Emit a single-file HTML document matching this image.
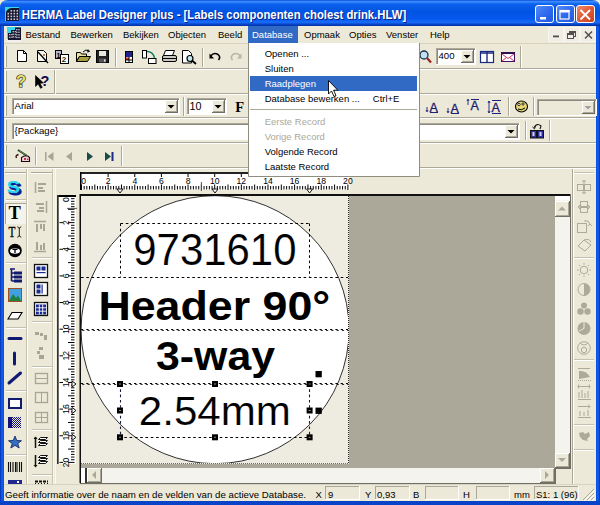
<!DOCTYPE html><html><head><meta charset="utf-8"><style>html,body{margin:0;padding:0;width:600px;height:505px;overflow:hidden;background:#ECE9D8}svg{display:block;font-family:"Liberation Sans",sans-serif}</style></head><body><svg width="600" height="505" viewBox="0 0 600 505" shape-rendering="auto"><rect x="0" y="0" width="600" height="505" fill="#ECE9D8" />
<defs><linearGradient id="tg" x1="0" y1="0" x2="0" y2="26" gradientUnits="userSpaceOnUse"><stop offset="0" stop-color="#0A4AD8"/><stop offset="0.06" stop-color="#3C8EFF"/><stop offset="0.16" stop-color="#0C60EE"/><stop offset="0.45" stop-color="#0054E3"/><stop offset="0.72" stop-color="#0558EC"/><stop offset="0.86" stop-color="#1A6CF8"/><stop offset="0.93" stop-color="#0846C8"/><stop offset="1" stop-color="#0030A8"/></linearGradient><linearGradient id="bmin" x1="0" y1="0" x2="1" y2="1"><stop offset="0" stop-color="#5A8EF8"/><stop offset="0.5" stop-color="#2F6BF0"/><stop offset="1" stop-color="#2456D8"/></linearGradient><linearGradient id="bcl" x1="0" y1="0" x2="1" y2="1"><stop offset="0" stop-color="#F09070"/><stop offset="0.5" stop-color="#E05A38"/><stop offset="1" stop-color="#C8401E"/></linearGradient><linearGradient id="lb" x1="0" y1="0" x2="1" y2="0"><stop offset="0" stop-color="#0831B0"/><stop offset="0.5" stop-color="#1560F0"/><stop offset="1" stop-color="#0050E0"/></linearGradient><linearGradient id="rb" x1="0" y1="0" x2="1" y2="0"><stop offset="0" stop-color="#0050E0"/><stop offset="0.5" stop-color="#1560F0"/><stop offset="1" stop-color="#0831B0"/></linearGradient></defs>
<path d="M0 26 V8 Q0 0 8 0 H592 Q600 0 600 8 V26 Z" fill="url(#tg)"/>
<rect x="0" y="26" width="4" height="479" fill="url(#lb)" />
<rect x="596" y="26" width="4" height="479" fill="url(#rb)" />
<rect x="0" y="501" width="600" height="4" fill="#0843C8" />
<rect x="5" y="7" width="14" height="14" fill="#38D8EE" />
<path d="M6 21 V12 Q8 8 12 8 H19 V21 Z" fill="#15152E"/>
<g fill="#C8C8D0">
<rect x="7.5" y="12.8" width="1.6" height="1.6"/>
<rect x="7.5" y="15.6" width="1.6" height="1.6"/>
<rect x="7.5" y="18.4" width="1.6" height="1.6"/>
<rect x="10.5" y="10.0" width="1.6" height="1.6"/>
<rect x="10.5" y="12.8" width="1.6" height="1.6"/>
<rect x="10.5" y="15.6" width="1.6" height="1.6"/>
<rect x="10.5" y="18.4" width="1.6" height="1.6"/>
<rect x="13.5" y="10.0" width="1.6" height="1.6"/>
<rect x="13.5" y="12.8" width="1.6" height="1.6"/>
<rect x="13.5" y="15.6" width="1.6" height="1.6"/>
<rect x="13.5" y="18.4" width="1.6" height="1.6"/>
<rect x="16.5" y="10.0" width="1.6" height="1.6"/>
<rect x="16.5" y="12.8" width="1.6" height="1.6"/>
<rect x="16.5" y="15.6" width="1.6" height="1.6"/>
<rect x="16.5" y="18.4" width="1.6" height="1.6"/>
</g>
<text transform="translate(22.8,20.3) scale(0.944,1)" font-size="12" font-weight="bold" fill="#0A2080">HERMA Label Designer plus - [Labels componenten cholest drink.HLW]</text>
<text transform="translate(21.8,19.3) scale(0.944,1)" font-size="12" font-weight="bold" fill="#fff">HERMA Label Designer plus - [Labels componenten cholest drink.HLW]</text>
<rect x="535.5" y="5.5" width="18" height="17" rx="2.5" fill="url(#bmin)" stroke="#fff" stroke-width="1"/>
<rect x="556.5" y="5.5" width="18" height="17" rx="2.5" fill="url(#bmin)" stroke="#fff" stroke-width="1"/>
<rect x="576.5" y="5.5" width="18" height="17" rx="2.5" fill="url(#bcl)" stroke="#fff" stroke-width="1"/>
<rect x="540" y="17" width="6" height="2.5" fill="#fff" />
<rect x="560" y="10.5" width="9" height="8.5" fill="none" stroke="#fff" stroke-width="1.2"/>
<rect x="560" y="10" width="9.5" height="2.5" fill="#fff" />
<path d="M580.5 10 L590 19.5 M590 10 L580.5 19.5" stroke="#fff" stroke-width="1.8"/>
<rect x="4" y="26" width="592" height="18" fill="#ECE9D8" />
<rect x="7" y="27" width="14" height="15" fill="#38D8EE" />
<rect x="7" y="39" width="14" height="3" fill="#F0F0F0" />
<path d="M8 40 V33 H11 V30 H15 V27.5 H21 V40 Z" fill="#15152E"/>
<g fill="#B8B8C0">
<rect x="9" y="34.0" width="1.5" height="1.3"/><rect x="11.2" y="34.0" width="1.5" height="1.3"/>
<rect x="9" y="36.6" width="1.5" height="1.3"/><rect x="11.2" y="36.6" width="1.5" height="1.3"/>
<rect x="12.5" y="31.0" width="1.5" height="1.3"/><rect x="14.7" y="31.0" width="1.5" height="1.3"/>
<rect x="12.5" y="33.6" width="1.5" height="1.3"/><rect x="14.7" y="33.6" width="1.5" height="1.3"/>
<rect x="12.5" y="36.2" width="1.5" height="1.3"/><rect x="14.7" y="36.2" width="1.5" height="1.3"/>
<rect x="16" y="29.0" width="1.5" height="1.3"/><rect x="18.2" y="29.0" width="1.5" height="1.3"/>
<rect x="16" y="31.6" width="1.5" height="1.3"/><rect x="18.2" y="31.6" width="1.5" height="1.3"/>
<rect x="16" y="34.2" width="1.5" height="1.3"/><rect x="18.2" y="34.2" width="1.5" height="1.3"/>
<rect x="16" y="36.8" width="1.5" height="1.3"/><rect x="18.2" y="36.8" width="1.5" height="1.3"/>
</g>
<text x="25.5" y="37.8" font-size="9.5" fill="#000" font-weight="normal" text-anchor="start" >Bestand</text>
<text x="70.5" y="37.8" font-size="9.5" fill="#000" font-weight="normal" text-anchor="start" >Bewerken</text>
<text x="123" y="37.8" font-size="9.5" fill="#000" font-weight="normal" text-anchor="start" >Bekijken</text>
<text x="168" y="37.8" font-size="9.5" fill="#000" font-weight="normal" text-anchor="start" >Objecten</text>
<text x="218" y="37.8" font-size="9.5" fill="#000" font-weight="normal" text-anchor="start" >Beeld</text>
<rect x="248" y="26" width="50" height="17" fill="#316AC5" />
<text x="252" y="37.8" font-size="9.5" fill="#fff" font-weight="normal" text-anchor="start" >Database</text>
<text x="304" y="37.8" font-size="9.5" fill="#000" font-weight="normal" text-anchor="start" >Opmaak</text>
<text x="349" y="37.8" font-size="9.5" fill="#000" font-weight="normal" text-anchor="start" >Opties</text>
<text x="386" y="37.8" font-size="9.5" fill="#000" font-weight="normal" text-anchor="start" >Venster</text>
<text x="430" y="37.8" font-size="9.5" fill="#000" font-weight="normal" text-anchor="start" >Help</text>
<rect x="548.5" y="27.5" width="15" height="14" fill="#F0EEE4" stroke="#F6F5F0" stroke-width="1"/>
<rect x="564.5" y="27.5" width="15" height="14" fill="#F0EEE4" stroke="#F6F5F0" stroke-width="1"/>
<rect x="580.5" y="27.5" width="15" height="14" fill="#F0EEE4" stroke="#F6F5F0" stroke-width="1"/>
<rect x="553" y="35.5" width="6" height="1.8" fill="#505050" />
<rect x="569.5" y="31.5" width="6" height="5" fill="none" stroke="#505050"/><rect x="567.5" y="33.5" width="6" height="5" fill="#F0EEE4" stroke="#505050"/>
<rect x="569.5" y="31.5" width="6" height="1.5" fill="#505050" />
<rect x="567.5" y="33.5" width="6" height="1.5" fill="#505050" />
<path d="M585 31.5 L592 38.5 M592 31.5 L585 38.5" stroke="#505050" stroke-width="1.5"/>
<line x1="4" y1="68.5" x2="596" y2="68.5" stroke="#ACA899" stroke-width="1"/>
<line x1="4" y1="69.5" x2="596" y2="69.5" stroke="#fff" stroke-width="1"/>
<line x1="4" y1="93.5" x2="596" y2="93.5" stroke="#ACA899" stroke-width="1"/>
<line x1="4" y1="94.5" x2="596" y2="94.5" stroke="#fff" stroke-width="1"/>
<line x1="4" y1="117.5" x2="596" y2="117.5" stroke="#ACA899" stroke-width="1"/>
<line x1="4" y1="118.5" x2="596" y2="118.5" stroke="#fff" stroke-width="1"/>
<line x1="4" y1="142.5" x2="596" y2="142.5" stroke="#ACA899" stroke-width="1"/>
<line x1="4" y1="143.5" x2="596" y2="143.5" stroke="#fff" stroke-width="1"/>
<line x1="4" y1="167.5" x2="596" y2="167.5" stroke="#ACA899" stroke-width="1"/>
<line x1="4" y1="168.5" x2="596" y2="168.5" stroke="#fff" stroke-width="1"/>
<line x1="4" y1="43.5" x2="596" y2="43.5" stroke="#D8D2BD" stroke-width="1"/>
<line x1="5.5" y1="46" x2="5.5" y2="67" stroke="#fff" stroke-width="1"/>
<line x1="6.5" y1="46" x2="6.5" y2="67" stroke="#ACA899" stroke-width="1"/>
<line x1="5.5" y1="71" x2="5.5" y2="92" stroke="#fff" stroke-width="1"/>
<line x1="6.5" y1="71" x2="6.5" y2="92" stroke="#ACA899" stroke-width="1"/>
<line x1="5.5" y1="96" x2="5.5" y2="116" stroke="#fff" stroke-width="1"/>
<line x1="6.5" y1="96" x2="6.5" y2="116" stroke="#ACA899" stroke-width="1"/>
<line x1="5.5" y1="120" x2="5.5" y2="141" stroke="#fff" stroke-width="1"/>
<line x1="6.5" y1="120" x2="6.5" y2="141" stroke="#ACA899" stroke-width="1"/>
<line x1="5.5" y1="145" x2="5.5" y2="166" stroke="#fff" stroke-width="1"/>
<line x1="6.5" y1="145" x2="6.5" y2="166" stroke="#ACA899" stroke-width="1"/>
<line x1="54.5" y1="70" x2="54.5" y2="94" stroke="#ACA899" stroke-width="1"/>
<line x1="55.5" y1="70" x2="55.5" y2="94" stroke="#fff" stroke-width="1"/>
<path d="M17.5 50.5 H23.5 L26.5 53.5 V61.5 H17.5 Z" fill="#fff" stroke="#000"/>
<path d="M23.5 50.5 V53.5 H26.5" fill="none" stroke="#000"/>
<path d="M37.5 50.5 H43.5 L46.5 53.5 V61.5 H37.5 Z" fill="#F8F8F0" stroke="#000"/>
<path d="M38 52 L48 63" stroke="#000" stroke-width="1.3"/>
<rect x="43" y="54" width="2" height="2" fill="#C08040"/>
<rect x="55.5" y="50.5" width="6" height="8" fill="#B8B8D0" stroke="#000"/>
<rect x="60.5" y="54.5" width="8" height="9" fill="#fff" stroke="#000"/>
<text x="56.5" y="57.5" font-size="7" font-weight="bold" fill="#000">1</text>
<text x="61.8" y="62.2" font-size="8" font-weight="bold" fill="#000" fill-opacity="0.9">2</text>
<path d="M76.5 52.5 H80.5 L81.5 54 H86.5 V56.5 H79.5 L76.5 61.5 Z" fill="#E8E0A0" stroke="#000"/>
<path d="M76.5 61.5 L79.5 56.5 H90.5 L87.5 61.5 Z" fill="#A8A040" stroke="#000"/>
<path d="M83 52 Q86 48.5 89 51" fill="none" stroke="#000"/><path d="M88 49.5 L89.5 51.5 L87 52" fill="none" stroke="#000"/>
<rect x="96.5" y="50.5" width="12" height="12" fill="#222" stroke="#000"/>
<rect x="99" y="51" width="7" height="5" fill="#E8E8E0"/>
<rect x="99" y="58.5" width="7" height="4" fill="#555"/><rect x="104" y="59.5" width="1.5" height="2" fill="#eee"/>
<line x1="115.5" y1="48" x2="115.5" y2="67" stroke="#ACA899" stroke-width="1"/>
<line x1="116.5" y1="48" x2="116.5" y2="67" stroke="#fff" stroke-width="1"/>
<rect x="125.5" y="51.5" width="7" height="11" fill="#fff" stroke="#000"/>
<rect x="126" y="52" width="6" height="5" fill="#202090" />
<rect x="126" y="57.5" width="3" height="2.5" fill="#D03020" />
<path d="M129 57 V62 M126 60 H132" stroke="#000"/>
<rect x="142.5" y="50.5" width="4" height="7.5" fill="#fff" stroke="#000"/>
<path d="M147 51.5 Q153 51.5 154.5 58" fill="none" stroke="#107860" stroke-width="1.4"/>
<rect x="148.5" y="58.5" width="7.5" height="5" fill="#fff" stroke="#000"/>
<path d="M165.5 50.5 H174.5 L172.5 55.5 H163.5 Z" fill="#fff" stroke="#000"/>
<rect x="162.5" y="55.5" width="14" height="6" rx="1.5" fill="#C8C8C0" stroke="#000"/>
<path d="M163 58.5 H176" stroke="#000"/>
<path d="M182.5 50.5 H188.5 L191.5 53.5 V63 H182.5 Z" fill="#fff" stroke="#000"/>
<circle cx="190" cy="58.5" r="3" fill="#C0E8E8" stroke="#000" stroke-width="1.2"/>
<path d="M192 60.5 L196 64" stroke="#000" stroke-width="1.8"/>
<line x1="202.5" y1="48" x2="202.5" y2="67" stroke="#ACA899" stroke-width="1"/>
<line x1="203.5" y1="48" x2="203.5" y2="67" stroke="#fff" stroke-width="1"/>
<path d="M210.5 56 Q214 52 218 54.5 Q221 57 218.5 60" fill="none" stroke="#000" stroke-width="1.6"/>
<path d="M209.5 53.5 V58.5 H214 Z" fill="#000"/>
<path d="M240.5 56 Q237 52 233 54.5 Q230 57 232.5 60" fill="none" stroke="#B8B4A8" stroke-width="1.6"/>
<path d="M241.5 53.5 V58.5 H237 Z" fill="#B8B4A8"/>
<circle cx="424" cy="55" r="4" fill="#C0E0F0" stroke="#203050" stroke-width="1.3"/>
<path d="M427 58 L431 62.5" stroke="#A02020" stroke-width="2.2"/>
<rect x="480.5" y="51.5" width="13" height="11" fill="#fff" stroke="#1a2a80" stroke-width="1.2"/>
<path d="M481 53 H493 M487 52 V62" stroke="#1a2a80" stroke-width="1.4"/>
<rect x="501.5" y="52.5" width="13" height="9" fill="#fff" stroke="#401060" stroke-width="1"/>
<rect x="501" y="52" width="14" height="2" fill="#301050" />
<path d="M502 54 L508 58.5 L514 54 M502 61 L506.5 57.5 M514 61 L509.5 57.5" fill="none" stroke="#D03070" stroke-width="1"/>
<line x1="520.5" y1="46" x2="520.5" y2="68" stroke="#ACA899" stroke-width="1"/>
<line x1="521.5" y1="46" x2="521.5" y2="68" stroke="#fff" stroke-width="1"/>
<text x="16" y="87.3" font-size="16.5" font-weight="bold" fill="#E8E070" stroke="#111" stroke-width="1.1" paint-order="stroke" style="paint-order:stroke">?</text>
<path d="M35.5 75.5 V86.5 L38.2 84 L40.5 88.3 L42.3 87.4 L40 83.3 L43.5 83 Z" fill="#000" stroke="#000" stroke-width="0.6"/>
<text x="40.5" y="86" font-size="14.5" font-weight="bold" fill="#0A0A50">?</text>
<rect x="12" y="98" width="168" height="17" fill="#fff"/>
<line x1="12" y1="98.5" x2="180" y2="98.5" stroke="#ACA899" stroke-width="1"/>
<line x1="12.5" y1="98" x2="12.5" y2="115" stroke="#ACA899" stroke-width="1"/>
<line x1="13" y1="99.5" x2="179" y2="99.5" stroke="#8C8A80" stroke-width="1"/>
<line x1="13.5" y1="99" x2="13.5" y2="114" stroke="#8C8A80" stroke-width="1"/>
<line x1="12" y1="114.5" x2="180" y2="114.5" stroke="#fff" stroke-width="1"/>
<line x1="179.5" y1="98" x2="179.5" y2="115" stroke="#fff" stroke-width="1"/>
<rect x="165" y="100" width="13" height="13" fill="#ECE9D8"/>
<line x1="165" y1="100.5" x2="178" y2="100.5" stroke="#fff" stroke-width="1"/>
<line x1="165.5" y1="100" x2="165.5" y2="113" stroke="#fff" stroke-width="1"/>
<line x1="165" y1="112.5" x2="178" y2="112.5" stroke="#716F64" stroke-width="1"/>
<line x1="177.5" y1="100" x2="177.5" y2="113" stroke="#716F64" stroke-width="1"/>
<line x1="166" y1="111.5" x2="177" y2="111.5" stroke="#ACA899" stroke-width="1"/>
<line x1="176.5" y1="101" x2="176.5" y2="112" stroke="#ACA899" stroke-width="1"/>
<path d="M167.5 105.0 H174.5 L171.0 108.5 Z" fill="#000"/>
<text x="14.5" y="109.4" font-size="9.6" fill="#000" font-weight="normal" text-anchor="start" >Arial</text>
<rect x="187" y="98" width="40" height="17" fill="#fff"/>
<line x1="187" y1="98.5" x2="227" y2="98.5" stroke="#ACA899" stroke-width="1"/>
<line x1="187.5" y1="98" x2="187.5" y2="115" stroke="#ACA899" stroke-width="1"/>
<line x1="188" y1="99.5" x2="226" y2="99.5" stroke="#8C8A80" stroke-width="1"/>
<line x1="188.5" y1="99" x2="188.5" y2="114" stroke="#8C8A80" stroke-width="1"/>
<line x1="187" y1="114.5" x2="227" y2="114.5" stroke="#fff" stroke-width="1"/>
<line x1="226.5" y1="98" x2="226.5" y2="115" stroke="#fff" stroke-width="1"/>
<rect x="212" y="100" width="13" height="13" fill="#ECE9D8"/>
<line x1="212" y1="100.5" x2="225" y2="100.5" stroke="#fff" stroke-width="1"/>
<line x1="212.5" y1="100" x2="212.5" y2="113" stroke="#fff" stroke-width="1"/>
<line x1="212" y1="112.5" x2="225" y2="112.5" stroke="#716F64" stroke-width="1"/>
<line x1="224.5" y1="100" x2="224.5" y2="113" stroke="#716F64" stroke-width="1"/>
<line x1="213" y1="111.5" x2="224" y2="111.5" stroke="#ACA899" stroke-width="1"/>
<line x1="223.5" y1="101" x2="223.5" y2="112" stroke="#ACA899" stroke-width="1"/>
<path d="M214.5 105.0 H221.5 L218.0 108.5 Z" fill="#000"/>
<text x="189.5" y="109.8" font-size="10.8" fill="#000" font-weight="normal" text-anchor="start" >10</text>
<line x1="183.5" y1="97" x2="183.5" y2="116" stroke="#ACA899" stroke-width="1"/>
<line x1="184.5" y1="97" x2="184.5" y2="116" stroke="#fff" stroke-width="1"/>
<rect x="436" y="48" width="40" height="17" fill="#fff"/>
<line x1="436" y1="48.5" x2="476" y2="48.5" stroke="#ACA899" stroke-width="1"/>
<line x1="436.5" y1="48" x2="436.5" y2="65" stroke="#ACA899" stroke-width="1"/>
<line x1="437" y1="49.5" x2="475" y2="49.5" stroke="#8C8A80" stroke-width="1"/>
<line x1="437.5" y1="49" x2="437.5" y2="64" stroke="#8C8A80" stroke-width="1"/>
<line x1="436" y1="64.5" x2="476" y2="64.5" stroke="#fff" stroke-width="1"/>
<line x1="475.5" y1="48" x2="475.5" y2="65" stroke="#fff" stroke-width="1"/>
<rect x="461" y="50" width="13" height="13" fill="#ECE9D8"/>
<line x1="461" y1="50.5" x2="474" y2="50.5" stroke="#fff" stroke-width="1"/>
<line x1="461.5" y1="50" x2="461.5" y2="63" stroke="#fff" stroke-width="1"/>
<line x1="461" y1="62.5" x2="474" y2="62.5" stroke="#716F64" stroke-width="1"/>
<line x1="473.5" y1="50" x2="473.5" y2="63" stroke="#716F64" stroke-width="1"/>
<line x1="462" y1="61.5" x2="473" y2="61.5" stroke="#ACA899" stroke-width="1"/>
<line x1="472.5" y1="51" x2="472.5" y2="62" stroke="#ACA899" stroke-width="1"/>
<path d="M463.5 55.0 H470.5 L467.0 58.5 Z" fill="#000"/>
<text x="438.5" y="59.4" font-size="9.6" fill="#000" font-weight="normal" text-anchor="start" >400</text>
<text x="235.3" y="112" font-size="14.5" font-weight="bold" fill="#000" font-family="Liberation Serif">F</text>
<text x="429.5" y="111.5" font-size="12.5" fill="#1a1a70" stroke="#1a1a70" stroke-width="0.3">A</text>
<path d="M430 112.5 H438" stroke="#202080"/>
<path d="M427 107 V111 M426 110 L427 112 L428 110" stroke="#202080" fill="none" stroke-width="0.9"/>
<text x="450.5" y="112.5" font-size="12.5" fill="#1a1a70" stroke="#1a1a70" stroke-width="0.3">A</text>
<path d="M451 113.5 H459" stroke="#202080"/>
<path d="M448 108 V112 M447 111 L448 113 L449 111" stroke="#202080" fill="none" stroke-width="0.9"/>
<text x="470.5" y="109.5" font-size="12.5" fill="#1a1a70" stroke="#1a1a70" stroke-width="0.3">A</text>
<path d="M471 99.5 H479" stroke="#202080"/>
<path d="M468 100 V105 M467 101 L468 99 L469 101" stroke="#202080" fill="none" stroke-width="0.9"/>
<text x="491.5" y="111.5" font-size="12.5" fill="#1a1a70" stroke="#1a1a70" stroke-width="0.3">A</text>
<path d="M492 100.5 H501 M492 113.5 H501" stroke="#202080"/>
<path d="M489 101 V113 M488 103 L489 101 L490 103 M488 111 L489 113 L490 111" stroke="#202080" fill="none" stroke-width="0.9"/>
<line x1="508.5" y1="97" x2="508.5" y2="116" stroke="#ACA899" stroke-width="1"/>
<line x1="509.5" y1="97" x2="509.5" y2="116" stroke="#fff" stroke-width="1"/>
<ellipse cx="521.5" cy="106.5" rx="6" ry="5.5" fill="#E8D870" stroke="#000" stroke-width="1.1"/>
<circle cx="519" cy="104.5" r="1.2" fill="#fff" stroke="#000" stroke-width="0.8"/><circle cx="523" cy="104" r="1.1" fill="#fff" stroke="#000" stroke-width="0.8"/><path d="M518 109 Q521 111 525 108" fill="none" stroke="#000" stroke-width="1"/>
<line x1="533.5" y1="97" x2="533.5" y2="116" stroke="#ACA899" stroke-width="1"/>
<line x1="534.5" y1="97" x2="534.5" y2="116" stroke="#fff" stroke-width="1"/>
<rect x="537" y="99" width="60" height="17" fill="#ECE9D8"/>
<line x1="537" y1="99.5" x2="597" y2="99.5" stroke="#ACA899" stroke-width="1"/>
<line x1="537.5" y1="99" x2="537.5" y2="116" stroke="#ACA899" stroke-width="1"/>
<line x1="538" y1="100.5" x2="596" y2="100.5" stroke="#8C8A80" stroke-width="1"/>
<line x1="538.5" y1="100" x2="538.5" y2="115" stroke="#8C8A80" stroke-width="1"/>
<line x1="537" y1="115.5" x2="597" y2="115.5" stroke="#fff" stroke-width="1"/>
<line x1="596.5" y1="99" x2="596.5" y2="116" stroke="#fff" stroke-width="1"/>
<rect x="582" y="101" width="13" height="13" fill="#ECE9D8"/>
<line x1="582" y1="101.5" x2="595" y2="101.5" stroke="#fff" stroke-width="1"/>
<line x1="582.5" y1="101" x2="582.5" y2="114" stroke="#fff" stroke-width="1"/>
<line x1="582" y1="113.5" x2="595" y2="113.5" stroke="#716F64" stroke-width="1"/>
<line x1="594.5" y1="101" x2="594.5" y2="114" stroke="#716F64" stroke-width="1"/>
<line x1="583" y1="112.5" x2="594" y2="112.5" stroke="#ACA899" stroke-width="1"/>
<line x1="593.5" y1="102" x2="593.5" y2="113" stroke="#ACA899" stroke-width="1"/>
<path d="M584.5 106.0 H591.5 L588.0 109.5 Z" fill="#A0A0A0"/>
<rect x="12" y="123" width="508" height="17" fill="#fff"/>
<line x1="12" y1="123.5" x2="520" y2="123.5" stroke="#ACA899" stroke-width="1"/>
<line x1="12.5" y1="123" x2="12.5" y2="140" stroke="#ACA899" stroke-width="1"/>
<line x1="13" y1="124.5" x2="519" y2="124.5" stroke="#8C8A80" stroke-width="1"/>
<line x1="13.5" y1="124" x2="13.5" y2="139" stroke="#8C8A80" stroke-width="1"/>
<line x1="12" y1="139.5" x2="520" y2="139.5" stroke="#fff" stroke-width="1"/>
<line x1="519.5" y1="123" x2="519.5" y2="140" stroke="#fff" stroke-width="1"/>
<rect x="505" y="125" width="13" height="13" fill="#ECE9D8"/>
<line x1="505" y1="125.5" x2="518" y2="125.5" stroke="#fff" stroke-width="1"/>
<line x1="505.5" y1="125" x2="505.5" y2="138" stroke="#fff" stroke-width="1"/>
<line x1="505" y1="137.5" x2="518" y2="137.5" stroke="#716F64" stroke-width="1"/>
<line x1="517.5" y1="125" x2="517.5" y2="138" stroke="#716F64" stroke-width="1"/>
<line x1="506" y1="136.5" x2="517" y2="136.5" stroke="#ACA899" stroke-width="1"/>
<line x1="516.5" y1="126" x2="516.5" y2="137" stroke="#ACA899" stroke-width="1"/>
<path d="M507.5 130.0 H514.5 L511.0 133.5 Z" fill="#000"/>
<text x="14.5" y="134.4" font-size="9.6" fill="#000" font-weight="normal" text-anchor="start" >{Package}</text>
<line x1="525.5" y1="121" x2="525.5" y2="140" stroke="#ACA899" stroke-width="1"/>
<line x1="526.5" y1="121" x2="526.5" y2="140" stroke="#fff" stroke-width="1"/>
<rect x="530.5" y="130.5" width="6" height="7.5" fill="#3030A0" stroke="#111" stroke-width="1"/><rect x="537.5" y="130.5" width="6" height="7.5" fill="#3030A0" stroke="#111" stroke-width="1"/>
<rect x="532.5" y="132" width="2" height="4" fill="#D0D0F0"/><rect x="539.5" y="132" width="2" height="4" fill="#D0D0F0"/>
<path d="M534 127.5 Q537 122.5 541 126 L540 129" fill="none" stroke="#111" stroke-width="1.1"/><path d="M532.5 127 L534.5 128.8 L535.5 126.3" fill="none" stroke="#111" stroke-width="1"/>
<line x1="549.5" y1="120" x2="549.5" y2="141" stroke="#ACA899" stroke-width="1"/>
<line x1="550.5" y1="120" x2="550.5" y2="141" stroke="#fff" stroke-width="1"/>
<path d="M18 150 L26.5 155.5" stroke="#1a3a1a" stroke-width="2"/><path d="M19 150.5 L26 155" stroke="#80B080" stroke-width="0.7"/>
<path d="M18.5 154.5 Q15 155.5 16.5 158" fill="none" stroke="#301010" stroke-width="1.4"/>
<path d="M21.5 161.5 V157.5 L24 156 H28 L29.5 157.5 V161.5 Z" fill="#F0D0D8" stroke="#1a0a0a" stroke-width="1.1"/>
<rect x="24" y="158" width="2" height="2" fill="#C03050"/><rect x="27" y="158.5" width="1.5" height="1.5" fill="#C03050"/>
<line x1="35.5" y1="147" x2="35.5" y2="165" stroke="#ACA899" stroke-width="1"/>
<line x1="36.5" y1="147" x2="36.5" y2="165" stroke="#fff" stroke-width="1"/>
<rect x="45" y="152" width="1.5" height="9" fill="#A8A498"/><path d="M53.5 152 V161 L47.5 156.5 Z" fill="#A8A498"/>
<path d="M72 152 V161 L66 156.5 Z" fill="#A8A498"/>
<path d="M87 152 V161 L93 156.5 Z" fill="#1A4A4A"/>
<path d="M105 152 V161 L111 156.5 Z" fill="#1A4A4A"/><rect x="111.5" y="152" width="2" height="9" fill="#1A2A8A"/>
<line x1="121.5" y1="146" x2="121.5" y2="166" stroke="#ACA899" stroke-width="1"/>
<line x1="122.5" y1="146" x2="122.5" y2="166" stroke="#fff" stroke-width="1"/>
<line x1="5" y1="172.5" x2="26" y2="172.5" stroke="#ACA899" stroke-width="1"/>
<line x1="5" y1="173.5" x2="26" y2="173.5" stroke="#fff" stroke-width="1"/>
<line x1="31" y1="172.5" x2="52" y2="172.5" stroke="#ACA899" stroke-width="1"/>
<line x1="31" y1="173.5" x2="52" y2="173.5" stroke="#fff" stroke-width="1"/>
<line x1="26.5" y1="169" x2="26.5" y2="484" stroke="#C4C0B0" stroke-width="1"/>
<line x1="27.5" y1="169" x2="27.5" y2="484" stroke="#fff" stroke-width="1"/>
<line x1="52.5" y1="169" x2="52.5" y2="484" stroke="#C8C4B4" stroke-width="1"/>
<line x1="53.5" y1="169" x2="53.5" y2="484" stroke="#F8F7F0" stroke-width="1"/>
<line x1="55.5" y1="169" x2="55.5" y2="484" stroke="#FAF9F4" stroke-width="1"/>
<rect x="80" y="173" width="270" height="17" fill="#fff" />
<rect x="80" y="172" width="270" height="2" fill="#222" />
<rect x="80" y="172" width="1.5" height="18" fill="#000" />
<rect x="58" y="195" width="18" height="269" fill="#fff" />
<rect x="57" y="195" width="19" height="2" fill="#000" />
<rect x="57" y="195" width="1.7" height="269" fill="#333" />
<rect x="80" y="194" width="491" height="2" fill="#111" />
<rect x="79.5" y="194" width="1.5" height="289" fill="#111" />
<rect x="81" y="196" width="474" height="272" fill="#ACA899" />
<rect x="81" y="196" width="267" height="267" fill="#EEEBE0" />
<path d="M81.50 184.5 V190 M84.16 186 V189.5 M86.83 186 V189.5 M89.49 186 V189.5 M92.16 186 V189.5 M94.82 184.5 V190 M97.48 186 V189.5 M100.15 186 V189.5 M102.81 186 V189.5 M105.48 186 V189.5 M108.14 184.5 V190 M108.14 174 V177 M110.80 186 V189.5 M113.47 186 V189.5 M116.13 186 V189.5 M118.80 186 V189.5 M121.46 184.5 V190 M124.12 186 V189.5 M126.79 186 V189.5 M129.45 186 V189.5 M132.12 186 V189.5 M134.78 184.5 V190 M134.78 174 V177 M137.44 186 V189.5 M140.11 186 V189.5 M142.77 186 V189.5 M145.44 186 V189.5 M148.10 184.5 V190 M150.76 186 V189.5 M153.43 186 V189.5 M156.09 186 V189.5 M158.76 186 V189.5 M161.42 184.5 V190 M161.42 174 V177 M164.08 186 V189.5 M166.75 186 V189.5 M169.41 186 V189.5 M172.08 186 V189.5 M174.74 184.5 V190 M177.40 186 V189.5 M180.07 186 V189.5 M182.73 186 V189.5 M185.40 186 V189.5 M188.06 184.5 V190 M188.06 174 V177 M190.72 186 V189.5 M193.39 186 V189.5 M196.05 186 V189.5 M198.72 186 V189.5 M201.38 184.5 V190 M204.04 186 V189.5 M206.71 186 V189.5 M209.37 186 V189.5 M212.04 186 V189.5 M214.70 184.5 V190 M214.70 174 V177 M217.36 186 V189.5 M220.03 186 V189.5 M222.69 186 V189.5 M225.36 186 V189.5 M228.02 184.5 V190 M230.68 186 V189.5 M233.35 186 V189.5 M236.01 186 V189.5 M238.68 186 V189.5 M241.34 184.5 V190 M241.34 174 V177 M244.00 186 V189.5 M246.67 186 V189.5 M249.33 186 V189.5 M252.00 186 V189.5 M254.66 184.5 V190 M257.32 186 V189.5 M259.99 186 V189.5 M262.65 186 V189.5 M265.32 186 V189.5 M267.98 184.5 V190 M267.98 174 V177 M270.64 186 V189.5 M273.31 186 V189.5 M275.97 186 V189.5 M278.64 186 V189.5 M281.30 184.5 V190 M283.96 186 V189.5 M286.63 186 V189.5 M289.29 186 V189.5 M291.96 186 V189.5 M294.62 184.5 V190 M294.62 174 V177 M297.28 186 V189.5 M299.95 186 V189.5 M302.61 186 V189.5 M305.28 186 V189.5 M307.94 184.5 V190 M310.60 186 V189.5 M313.27 186 V189.5 M315.93 186 V189.5 M318.60 186 V189.5 M321.26 184.5 V190 M321.26 174 V177 M323.92 186 V189.5 M326.59 186 V189.5 M329.25 186 V189.5 M331.92 186 V189.5 M334.58 184.5 V190 M337.24 186 V189.5 M339.91 186 V189.5 M342.57 186 V189.5 M345.24 186 V189.5 M347.90 184.5 V190 M347.90 174 V177" stroke="#000" stroke-width="1"/>
<path d="M201.38 182 V191" stroke="#555" stroke-width="1"/>
<text x="81.3" y="184" font-size="8.6" fill="#000" font-weight="normal" text-anchor="start" >0</text>
<text x="108.14" y="184" font-size="8.6" fill="#000" font-weight="normal" text-anchor="middle" >2</text>
<text x="134.78" y="184" font-size="8.6" fill="#000" font-weight="normal" text-anchor="middle" >4</text>
<text x="161.42000000000002" y="184" font-size="8.6" fill="#000" font-weight="normal" text-anchor="middle" >6</text>
<text x="188.06" y="184" font-size="8.6" fill="#000" font-weight="normal" text-anchor="middle" >8</text>
<text x="214.7" y="184" font-size="8.6" fill="#000" font-weight="normal" text-anchor="middle" >10</text>
<text x="241.34" y="184" font-size="8.6" fill="#000" font-weight="normal" text-anchor="middle" >12</text>
<text x="267.98" y="184" font-size="8.6" fill="#000" font-weight="normal" text-anchor="middle" >14</text>
<text x="294.62" y="184" font-size="8.6" fill="#000" font-weight="normal" text-anchor="middle" >16</text>
<text x="321.26" y="184" font-size="8.6" fill="#000" font-weight="normal" text-anchor="middle" >18</text>
<text x="347.9" y="184" font-size="8.6" fill="#000" font-weight="normal" text-anchor="middle" >20</text>
<path d="M117 189 L120 193 L123 189 Z" fill="#fff" stroke="#000" stroke-width="0.9"/>
<path d="M212 189 L215 193 L218 189 Z" fill="#fff" stroke="#000" stroke-width="0.9"/>
<path d="M306.6 189 L309.6 193 L312.6 189 Z" fill="#fff" stroke="#000" stroke-width="0.9"/>
<path d="M68 196.00 H74.5 M71 198.66 H74.5 M71 201.33 H74.5 M71 203.99 H74.5 M71 206.66 H74.5 M68 209.32 H74.5 M71 211.98 H74.5 M71 214.65 H74.5 M71 217.31 H74.5 M71 219.98 H74.5 M68 222.64 H74.5 M59.5 222.64 H63 M71 225.30 H74.5 M71 227.97 H74.5 M71 230.63 H74.5 M71 233.30 H74.5 M68 235.96 H74.5 M71 238.62 H74.5 M71 241.29 H74.5 M71 243.95 H74.5 M71 246.62 H74.5 M68 249.28 H74.5 M59.5 249.28 H63 M71 251.94 H74.5 M71 254.61 H74.5 M71 257.27 H74.5 M71 259.94 H74.5 M68 262.60 H74.5 M71 265.26 H74.5 M71 267.93 H74.5 M71 270.59 H74.5 M71 273.26 H74.5 M68 275.92 H74.5 M59.5 275.92 H63 M71 278.58 H74.5 M71 281.25 H74.5 M71 283.91 H74.5 M71 286.58 H74.5 M68 289.24 H74.5 M71 291.90 H74.5 M71 294.57 H74.5 M71 297.23 H74.5 M71 299.90 H74.5 M68 302.56 H74.5 M59.5 302.56 H63 M71 305.22 H74.5 M71 307.89 H74.5 M71 310.55 H74.5 M71 313.22 H74.5 M68 315.88 H74.5 M71 318.54 H74.5 M71 321.21 H74.5 M71 323.87 H74.5 M71 326.54 H74.5 M68 329.20 H74.5 M59.5 329.20 H63 M71 331.86 H74.5 M71 334.53 H74.5 M71 337.19 H74.5 M71 339.86 H74.5 M68 342.52 H74.5 M71 345.18 H74.5 M71 347.85 H74.5 M71 350.51 H74.5 M71 353.18 H74.5 M68 355.84 H74.5 M59.5 355.84 H63 M71 358.50 H74.5 M71 361.17 H74.5 M71 363.83 H74.5 M71 366.50 H74.5 M68 369.16 H74.5 M71 371.82 H74.5 M71 374.49 H74.5 M71 377.15 H74.5 M71 379.82 H74.5 M68 382.48 H74.5 M59.5 382.48 H63 M71 385.14 H74.5 M71 387.81 H74.5 M71 390.47 H74.5 M71 393.14 H74.5 M68 395.80 H74.5 M71 398.46 H74.5 M71 401.13 H74.5 M71 403.79 H74.5 M71 406.46 H74.5 M68 409.12 H74.5 M59.5 409.12 H63 M71 411.78 H74.5 M71 414.45 H74.5 M71 417.11 H74.5 M71 419.78 H74.5 M68 422.44 H74.5 M71 425.10 H74.5 M71 427.77 H74.5 M71 430.43 H74.5 M71 433.10 H74.5 M68 435.76 H74.5 M59.5 435.76 H63 M71 438.42 H74.5 M71 441.09 H74.5 M71 443.75 H74.5 M71 446.42 H74.5 M68 449.08 H74.5 M71 451.74 H74.5 M71 454.41 H74.5 M71 457.07 H74.5 M71 459.74 H74.5 M68 462.40 H74.5 M59.5 462.40 H63" stroke="#000" stroke-width="1"/>
<path d="M67 208.39 H77" stroke="#555" stroke-width="1"/>
<text transform="translate(69.3,199.50) rotate(-90)" font-size="8.6" text-anchor="middle" fill="#000">0</text>
<text transform="translate(69.3,222.64) rotate(-90)" font-size="8.6" text-anchor="middle" fill="#000">2</text>
<text transform="translate(69.3,249.28) rotate(-90)" font-size="8.6" text-anchor="middle" fill="#000">4</text>
<text transform="translate(69.3,275.92) rotate(-90)" font-size="8.6" text-anchor="middle" fill="#000">6</text>
<text transform="translate(69.3,302.56) rotate(-90)" font-size="8.6" text-anchor="middle" fill="#000">8</text>
<text transform="translate(69.3,329.20) rotate(-90)" font-size="8.6" text-anchor="middle" fill="#000">10</text>
<text transform="translate(69.3,355.84) rotate(-90)" font-size="8.6" text-anchor="middle" fill="#000">12</text>
<text transform="translate(69.3,382.48) rotate(-90)" font-size="8.6" text-anchor="middle" fill="#000">14</text>
<text transform="translate(69.3,409.12) rotate(-90)" font-size="8.6" text-anchor="middle" fill="#000">16</text>
<text transform="translate(69.3,435.76) rotate(-90)" font-size="8.6" text-anchor="middle" fill="#000">18</text>
<text transform="translate(69.3,462.40) rotate(-90)" font-size="8.6" text-anchor="middle" fill="#000">20</text>
<path d="M72 381 L76 384 L72 387 Z" fill="#fff" stroke="#000" stroke-width="0.9"/>
<path d="M72 407.5 L76 410.5 L72 413.5 Z" fill="#fff" stroke="#000" stroke-width="0.9"/>
<path d="M72 434.3 L76 437.3 L72 440.3 Z" fill="#fff" stroke="#000" stroke-width="0.9"/>
<clipPath id="cc"><rect x="81" y="196" width="267" height="267"/></clipPath>
<g clip-path="url(#cc)">
<circle cx="215.06" cy="329.67" r="134" fill="#fff" stroke="#1a1a1a" stroke-width="0.9"/>
<path d="M81 277.5 H348" stroke="#000" stroke-width="1" fill="none" stroke-dasharray="2.6 2.7"/>
<path d="M120 437.5 H309.6" stroke="#000" stroke-width="1" fill="none" stroke-dasharray="2.6 2.7" stroke-dashoffset="1"/>
<path d="M120.5 223.5 H309.5" stroke="#000" stroke-width="1" fill="none" stroke-dasharray="2.6 2.7"/>
<path d="M81 329.5 H348" stroke="#000" stroke-width="1" fill="none" stroke-dasharray="2.2 3.1"/>
<path d="M81 330.5 H348" stroke="#000" stroke-width="1" fill="none" stroke-dasharray="2.2 3.1" stroke-dashoffset="-1.2" stroke-opacity="0.8"/>
<path d="M81 383.5 H348" stroke="#000" stroke-width="1" fill="none" stroke-dasharray="2.2 3.1"/>
<path d="M81 384.5 H348" stroke="#000" stroke-width="1" fill="none" stroke-dasharray="2.2 3.1" stroke-dashoffset="-1.2" stroke-opacity="0.8"/>
<path d="M120.5 223.5 V277 M309.5 223.5 V277" stroke="#000" stroke-width="1" fill="none" stroke-dasharray="2.6 2.7"/>
<path d="M120.5 384 V437 M309.5 384 V437" stroke="#1a1a40" stroke-width="1.1" fill="none" stroke-dasharray="2.6 2.7"/>
</g>
<path d="M348.5 196 V463" stroke="#f4f2ea"/><path d="M348.5 196 V463" stroke="#2a2a2a" stroke-dasharray="1 1"/>
<path d="M81 463.5 H349" stroke="#f4f2ea"/><path d="M81 463.5 H349" stroke="#6a675c" stroke-dasharray="1 1"/>
<text transform="translate(133.3,265.4) scale(0.957,1)" font-size="43.8" fill="#000" stroke="#fff" stroke-width="0.15">9731610</text>
<text transform="translate(98.4,319.6) scale(1.092,1)" font-size="41" font-weight="bold" fill="#000">Header 90°</text>
<text transform="translate(156,370) scale(1.045,1)" font-size="41" font-weight="bold" fill="#000">3-way</text>
<text transform="translate(138.8,424.8) scale(1.0525,1)" font-size="40" fill="#000" stroke="#fff" stroke-width="0.15">2.54mm</text>
<rect x="117" y="381" width="6" height="6" fill="#000"/>
<rect x="119" y="383.5" width="2" height="1" fill="#8a8a60"/>
<rect x="212" y="381" width="6" height="6" fill="#000"/>
<rect x="214" y="383.5" width="2" height="1" fill="#8a8a60"/>
<rect x="306.6" y="381" width="6" height="6" fill="#000"/>
<rect x="308.6" y="383.5" width="2" height="1" fill="#8a8a60"/>
<rect x="117" y="407.5" width="6" height="6" fill="#000"/>
<rect x="119" y="410.0" width="2" height="1" fill="#8a8a60"/>
<rect x="306.6" y="407.5" width="6" height="6" fill="#000"/>
<rect x="308.6" y="410.0" width="2" height="1" fill="#8a8a60"/>
<rect x="117" y="434.3" width="6" height="6" fill="#000"/>
<rect x="119" y="436.8" width="2" height="1" fill="#8a8a60"/>
<rect x="212" y="434.3" width="6" height="6" fill="#000"/>
<rect x="214" y="436.8" width="2" height="1" fill="#8a8a60"/>
<rect x="306.6" y="434.3" width="6" height="6" fill="#000"/>
<rect x="308.6" y="436.8" width="2" height="1" fill="#8a8a60"/>
<rect x="315.5" y="371" width="6.3" height="6.3" fill="#000" />
<rect x="315.5" y="407.6" width="6.3" height="6.3" fill="#000" />
<rect x="555" y="196" width="15" height="272" fill="#F4F3EE" />
<rect x="555" y="196" width="15" height="4" fill="#fff" />
<rect x="555" y="201" width="15" height="16" fill="#ECE9D8" />
<line x1="555" y1="201.5" x2="570" y2="201.5" stroke="#fff" stroke-width="1"/>
<line x1="555.5" y1="201" x2="555.5" y2="217" stroke="#fff" stroke-width="1"/>
<line x1="555" y1="216.5" x2="570" y2="216.5" stroke="#716F64" stroke-width="1"/>
<line x1="569.5" y1="201" x2="569.5" y2="217" stroke="#716F64" stroke-width="1"/>
<line x1="556" y1="215.5" x2="569" y2="215.5" stroke="#ACA899" stroke-width="1"/>
<line x1="568.5" y1="202" x2="568.5" y2="216" stroke="#ACA899" stroke-width="1"/>
<path d="M558.0 210.5 H566.0 L562.0 206.5 Z" fill="#ACA899"/>
<rect x="555" y="453" width="15" height="15" fill="#ECE9D8" />
<line x1="555" y1="453.5" x2="570" y2="453.5" stroke="#fff" stroke-width="1"/>
<line x1="555.5" y1="453" x2="555.5" y2="468" stroke="#fff" stroke-width="1"/>
<line x1="555" y1="467.5" x2="570" y2="467.5" stroke="#716F64" stroke-width="1"/>
<line x1="569.5" y1="453" x2="569.5" y2="468" stroke="#716F64" stroke-width="1"/>
<line x1="556" y1="466.5" x2="569" y2="466.5" stroke="#ACA899" stroke-width="1"/>
<line x1="568.5" y1="454" x2="568.5" y2="467" stroke="#ACA899" stroke-width="1"/>
<path d="M558.0 458.0 H566.0 L562.0 462.0 Z" fill="#ACA899"/>
<rect x="81" y="468" width="474" height="15" fill="#F4F3EE" />
<rect x="81" y="468" width="5" height="15" fill="#fff" />
<rect x="85" y="468" width="2" height="15" fill="#333" />
<rect x="87" y="468" width="15" height="15" fill="#ECE9D8" />
<line x1="87" y1="468.5" x2="102" y2="468.5" stroke="#fff" stroke-width="1"/>
<line x1="87.5" y1="468" x2="87.5" y2="483" stroke="#fff" stroke-width="1"/>
<line x1="87" y1="482.5" x2="102" y2="482.5" stroke="#716F64" stroke-width="1"/>
<line x1="101.5" y1="468" x2="101.5" y2="483" stroke="#716F64" stroke-width="1"/>
<line x1="88" y1="481.5" x2="101" y2="481.5" stroke="#ACA899" stroke-width="1"/>
<line x1="100.5" y1="469" x2="100.5" y2="482" stroke="#ACA899" stroke-width="1"/>
<path d="M96.0 471.0 V479.0 L92.0 475.0 Z" fill="#ACA899"/>
<rect x="540" y="468" width="15" height="15" fill="#ECE9D8" />
<line x1="540" y1="468.5" x2="555" y2="468.5" stroke="#fff" stroke-width="1"/>
<line x1="540.5" y1="468" x2="540.5" y2="483" stroke="#fff" stroke-width="1"/>
<line x1="540" y1="482.5" x2="555" y2="482.5" stroke="#716F64" stroke-width="1"/>
<line x1="554.5" y1="468" x2="554.5" y2="483" stroke="#716F64" stroke-width="1"/>
<line x1="541" y1="481.5" x2="554" y2="481.5" stroke="#ACA899" stroke-width="1"/>
<line x1="553.5" y1="469" x2="553.5" y2="482" stroke="#ACA899" stroke-width="1"/>
<path d="M545.0 471.0 V479.0 L549.0 475.0 Z" fill="#ACA899"/>
<rect x="555" y="468" width="16" height="16" fill="#ECE9D8" />
<line x1="570.5" y1="194" x2="570.5" y2="469" stroke="#716F64" stroke-width="1"/>
<line x1="555" y1="468.5" x2="571" y2="468.5" stroke="#716F64" stroke-width="1"/>
<line x1="555.5" y1="468" x2="555.5" y2="484" stroke="#716F64" stroke-width="1"/>
<line x1="80" y1="483.5" x2="556" y2="483.5" stroke="#716F64" stroke-width="1"/>
<text transform="translate(8.2,194.5) scale(1.2,1)" font-size="17" font-weight="bold" fill="#0A1A90" stroke="#0A1A90" stroke-width="0.8">S</text>
<text transform="translate(6.6,193) scale(1.2,1)" font-size="17" font-weight="bold" fill="#22D8F0">S</text>
<line x1="6" y1="199.5" x2="26" y2="199.5" stroke="#C4C0B0" stroke-width="1"/>
<line x1="6" y1="200.5" x2="26" y2="200.5" stroke="#fff" stroke-width="1"/>
<rect x="5" y="203" width="21" height="21" fill="#F4F3EC" />
<line x1="5" y1="203.5" x2="26" y2="203.5" stroke="#ACA899" stroke-width="1"/>
<line x1="5.5" y1="203" x2="5.5" y2="224" stroke="#ACA899" stroke-width="1"/>
<text x="8.6" y="219.4" font-size="18.5" font-weight="bold" fill="#000" font-family="Liberation Serif">T</text>
<text transform="translate(8.6,236.6) scale(0.78,1)" font-size="14.5" fill="#000" font-family="Liberation Serif" stroke="#000" stroke-width="0.3">T</text>
<path d="M17.3 226.8 Q19.3 227 19.3 229 V235 Q19.3 237 17.3 237.2 M21.3 226.8 Q19.3 227 19.3 229 M19.3 235 Q19.3 237 21.3 237.2" stroke="#222" fill="none" stroke-width="1"/>
<circle cx="15" cy="250.5" r="6.8" fill="#000"/>
<ellipse cx="15" cy="251" rx="5" ry="2.8" fill="#fff"/>
<path d="M12.5 249.3 H17.5 M15 249.3 V253" stroke="#000" stroke-width="1.3"/>
<line x1="6" y1="262.5" x2="26" y2="262.5" stroke="#C4C0B0" stroke-width="1"/>
<line x1="6" y1="263.5" x2="26" y2="263.5" stroke="#fff" stroke-width="1"/>
<path d="M10 269 H15 M11.5 269 V281 M11.5 273 H20 M11.5 277 H20 M11.5 281 H20" stroke="#101a70" stroke-width="1.6"/>
<rect x="14" y="271.5" width="8" height="3" fill="#101a70"/><rect x="14" y="275.5" width="8" height="3" fill="#101a70"/><rect x="14" y="279.5" width="8" height="3" fill="#101a70"/>
<rect x="8.5" y="288.5" width="13" height="13" fill="#40A0E0" stroke="#A05020"/>
<path d="M9 301 L13 294 L16 298 L18 295.5 L21 301 Z" fill="#208040"/>
<path d="M8 319 L12 312.5 H22 L18 319 Z" fill="#fff" stroke="#000" stroke-width="1.1"/>
<line x1="6" y1="327.5" x2="26" y2="327.5" stroke="#C4C0B0" stroke-width="1"/>
<line x1="6" y1="328.5" x2="26" y2="328.5" stroke="#fff" stroke-width="1"/>
<path d="M9 338.5 H21" stroke="#101a70" stroke-width="3" stroke-linecap="round"/>
<path d="M14.5 353 V364" stroke="#101a70" stroke-width="3" stroke-linecap="round"/>
<path d="M9 383 L20.5 373" stroke="#101a70" stroke-width="3" stroke-linecap="round"/>
<line x1="6" y1="390.5" x2="26" y2="390.5" stroke="#C4C0B0" stroke-width="1"/>
<line x1="6" y1="391.5" x2="26" y2="391.5" stroke="#fff" stroke-width="1"/>
<rect x="9" y="399" width="12" height="9" fill="#fff" stroke="#101a70" stroke-width="2"/>
<defs><linearGradient id="dg" x1="0" x2="1"><stop offset="0" stop-color="#202090"/><stop offset="1" stop-color="#E8E8F0"/></linearGradient></defs>
<rect x="8" y="417" width="4" height="11" fill="#14147A"/><g fill="#14147A"><rect x="12" y="417" width="1" height="1"/><rect x="12" y="419" width="1" height="1"/><rect x="12" y="421" width="1" height="1"/><rect x="12" y="423" width="1" height="1"/><rect x="12" y="425" width="1" height="1"/><rect x="12" y="427" width="1" height="1"/><rect x="13" y="418" width="1" height="1"/><rect x="13" y="420" width="1" height="1"/><rect x="13" y="422" width="1" height="1"/><rect x="13" y="424" width="1" height="1"/><rect x="13" y="426" width="1" height="1"/><rect x="14" y="417" width="1" height="1"/><rect x="14" y="419" width="1" height="1"/><rect x="14" y="421" width="1" height="1"/><rect x="14" y="423" width="1" height="1"/><rect x="14" y="425" width="1" height="1"/><rect x="14" y="427" width="1" height="1"/><rect x="15" y="418" width="1" height="1"/><rect x="15" y="420" width="1" height="1"/><rect x="15" y="422" width="1" height="1"/><rect x="15" y="424" width="1" height="1"/><rect x="15" y="426" width="1" height="1"/><rect x="16" y="417" width="1" height="1"/><rect x="16" y="419" width="1" height="1"/><rect x="16" y="421" width="1" height="1"/><rect x="16" y="423" width="1" height="1"/><rect x="16" y="425" width="1" height="1"/><rect x="16" y="427" width="1" height="1"/><rect x="17" y="418" width="1" height="1"/><rect x="17" y="420" width="1" height="1"/><rect x="17" y="422" width="1" height="1"/><rect x="17" y="424" width="1" height="1"/><rect x="17" y="426" width="1" height="1"/><rect x="18" y="417" width="1" height="1"/><rect x="18" y="419" width="1" height="1"/><rect x="18" y="421" width="1" height="1"/><rect x="18" y="423" width="1" height="1"/><rect x="18" y="425" width="1" height="1"/><rect x="18" y="427" width="1" height="1"/><rect x="19" y="418" width="1" height="1"/><rect x="19" y="420" width="1" height="1"/><rect x="19" y="422" width="1" height="1"/><rect x="19" y="424" width="1" height="1"/><rect x="19" y="426" width="1" height="1"/><rect x="20" y="417" width="1" height="1"/><rect x="20" y="419" width="1" height="1"/><rect x="20" y="421" width="1" height="1"/><rect x="20" y="423" width="1" height="1"/><rect x="20" y="425" width="1" height="1"/><rect x="20" y="427" width="1" height="1"/></g>
<path d="M15 436 L16.8 440.5 L21.5 440.7 L17.8 443.6 L19.2 448 L15 445.4 L10.8 448 L12.2 443.6 L8.5 440.7 L13.2 440.5 Z" fill="#3070C0" stroke="#101a60" stroke-width="0.8"/>
<line x1="6" y1="454.5" x2="26" y2="454.5" stroke="#C4C0B0" stroke-width="1"/>
<line x1="6" y1="455.5" x2="26" y2="455.5" stroke="#fff" stroke-width="1"/>
<path d="M8.5 462 V472 M10.5 462 V472 M13 462 V472 M15.5 462 V472 M17 462 V472 M19.5 462 V472 M21.5 462 V472" stroke="#111" stroke-width="1.1"/>
<rect x="8" y="480" width="14" height="4" fill="#202890" />
<rect x="17" y="481" width="2" height="2" fill="#fff" />
<path d="M35.5 182 V193" stroke="#A8A498" stroke-width="1.5"/><rect x="38" y="183" width="8" height="2" fill="#A8A498"/><rect x="38" y="187" width="5" height="2" fill="#A8A498"/><rect x="38" y="190" width="7" height="2" fill="#A8A498"/>
<path d="M46.5 201 V213" stroke="#A8A498" stroke-width="1.5"/><rect x="36" y="203" width="8" height="2" fill="#A8A498"/><rect x="39" y="207" width="5" height="2" fill="#A8A498"/><rect x="37" y="210" width="7" height="2" fill="#A8A498"/>
<path d="M34 221.5 H46" stroke="#A8A498" stroke-width="1.5"/><rect x="36" y="224" width="2" height="8" fill="#A8A498"/><rect x="40" y="224" width="2" height="5" fill="#A8A498"/><rect x="43" y="224" width="2" height="7" fill="#A8A498"/>
<path d="M34 251.5 H46" stroke="#A8A498" stroke-width="1.5"/><rect x="36" y="242" width="2" height="8" fill="#A8A498"/><rect x="40" y="245" width="2" height="5" fill="#A8A498"/><rect x="43" y="243" width="2" height="7" fill="#A8A498"/>
<line x1="32" y1="257.5" x2="52" y2="257.5" stroke="#C4C0B0" stroke-width="1"/>
<line x1="32" y1="258.5" x2="52" y2="258.5" stroke="#fff" stroke-width="1"/>
<rect x="34.5" y="264.5" width="13" height="13" fill="#fff" stroke="#111" stroke-width="1.3"/>
<rect x="34.5" y="282.5" width="13" height="13" fill="#fff" stroke="#111" stroke-width="1.3"/>
<rect x="34.5" y="302.5" width="13" height="13" fill="#fff" stroke="#111" stroke-width="1.3"/>
<rect x="36.5" y="266.5" width="4" height="4" fill="#1a2a90"/><rect x="41.5" y="266.5" width="4" height="4" fill="#1a2a90"/><rect x="36.5" y="272" width="9" height="1.2" fill="#1a2a90"/>
<rect x="36.5" y="284.5" width="4" height="4" fill="#1a2a90"/><rect x="36.5" y="289.5" width="4" height="4" fill="#1a2a90"/><rect x="41.5" y="284.5" width="1.2" height="9" fill="#1a2a90"/>
<rect x="36" y="304.5" width="10" height="10" fill="#1a2a90"/><path d="M36 307.8 H46 M36 311.2 H46 M39.3 304.5 V314.5 M42.7 304.5 V314.5" stroke="#fff" stroke-width="0.9"/>
<line x1="32" y1="321.5" x2="52" y2="321.5" stroke="#C4C0B0" stroke-width="1"/>
<line x1="32" y1="322.5" x2="52" y2="322.5" stroke="#fff" stroke-width="1"/>
<rect x="35" y="332" width="4" height="3" fill="#A8A498"/><rect x="40" y="333" width="3" height="3" fill="#A8A498"/><rect x="44" y="335" width="3" height="5" fill="#A8A498"/>
<rect x="39" y="347" width="4" height="3" fill="#A8A498"/><rect x="37" y="351" width="3" height="3" fill="#A8A498"/><rect x="39" y="355" width="5" height="4" fill="#A8A498"/>
<line x1="32" y1="366.5" x2="52" y2="366.5" stroke="#C4C0B0" stroke-width="1"/>
<line x1="32" y1="367.5" x2="52" y2="367.5" stroke="#fff" stroke-width="1"/>
<rect x="35.5" y="373.5" width="12" height="10" fill="none" stroke="#A8A498" stroke-width="1.3"/>
<rect x="35.5" y="392.5" width="12" height="10" fill="none" stroke="#A8A498" stroke-width="1.3"/>
<rect x="35.5" y="412.5" width="12" height="10" fill="none" stroke="#A8A498" stroke-width="1.3"/>
<path d="M36 378.5 H47" stroke="#A8A498"/><path d="M41.5 393 V402" stroke="#A8A498"/><path d="M36 417.5 H47 M41.5 413 V422" stroke="#A8A498"/>
<line x1="32" y1="429.5" x2="52" y2="429.5" stroke="#C4C0B0" stroke-width="1"/>
<line x1="32" y1="430.5" x2="52" y2="430.5" stroke="#fff" stroke-width="1"/>
<path d="M38.5 439.5 L40.5 437.5 H47.5 L45.5 439.5 Z" fill="#fff" stroke="#111" stroke-width="1"/>
<path d="M38.5 442.5 L40.5 440.5 H47.5 L45.5 442.5 Z" fill="#fff" stroke="#111" stroke-width="1"/>
<path d="M38.5 445.5 L40.5 443.5 H47.5 L45.5 445.5 Z" fill="#fff" stroke="#111" stroke-width="1"/>
<path d="M35.5 437 V448" stroke="#111" stroke-width="1.5"/>
<path d="M33.5 439 L35.5 436.5 L37.5 439 Z" fill="#111"/>
<path d="M38.5 457.5 L40.5 455.5 H47.5 L45.5 457.5 Z" fill="#fff" stroke="#111" stroke-width="1"/>
<path d="M38.5 460.5 L40.5 458.5 H47.5 L45.5 460.5 Z" fill="#fff" stroke="#111" stroke-width="1"/>
<path d="M38.5 463.5 L40.5 461.5 H47.5 L45.5 463.5 Z" fill="#fff" stroke="#111" stroke-width="1"/>
<path d="M35.5 455 V466" stroke="#111" stroke-width="1.5"/>
<path d="M33.5 465 L35.5 467.5 L37.5 465 Z" fill="#111"/>
<line x1="32" y1="474.5" x2="52" y2="474.5" stroke="#C4C0B0" stroke-width="1"/>
<line x1="32" y1="475.5" x2="52" y2="475.5" stroke="#fff" stroke-width="1"/>
<path d="M35 481.5 H48" stroke="#111" stroke-width="2" stroke-dasharray="3 1"/><path d="M35 483.5 H48" stroke="#111" stroke-width="1.2" stroke-dasharray="1 2"/>
<line x1="574" y1="172.5" x2="594" y2="172.5" stroke="#C4C0B0" stroke-width="1"/>
<line x1="574" y1="173.5" x2="594" y2="173.5" stroke="#fff" stroke-width="1"/>
<line x1="572.5" y1="169" x2="572.5" y2="484" stroke="#ACA899" stroke-width="1"/>
<line x1="573.5" y1="169" x2="573.5" y2="484" stroke="#fff" stroke-width="1"/>
<g fill="none" stroke="#ADA99B" stroke-width="1"><rect x="577.5" y="184.5" width="6" height="6"/><rect x="584.5" y="184.5" width="6" height="6"/><path d="M584 180 V194 M582 182 L584 180 L586 182 M582 192 L584 194 L586 192"/><rect x="580.5" y="201.5" width="7" height="5"/><rect x="580.5" y="207.5" width="7" height="5"/><path d="M578 207 H590 M580 205 L578 207 L580 209 M588 205 L590 207 L588 209"/><rect x="577.5" y="223.5" width="9" height="9"/><path d="M584 221 H588 L590 224 M588 226 L590 224 L592 226"/><path d="M578 246 L584 240 L591 245 L585 251 Z"/><path d="M584 240 Q589 238 591 242"/></g>
<line x1="574" y1="257.5" x2="594" y2="257.5" stroke="#C4C0B0" stroke-width="1"/>
<line x1="574" y1="258.5" x2="594" y2="258.5" stroke="#fff" stroke-width="1"/>
<g fill="none" stroke="#ADA99B" stroke-width="1"><circle cx="584" cy="270" r="3.8"/><path d="M584 263 V264.5 M584 275.5 V277 M577 270 H578.5 M589.5 270 H591 M579 265 L580 266 M588 274 L589 275 M589 265 L588 266 M579 275 L580 274"/><circle cx="584" cy="289.5" r="6"/></g>
<path d="M584 283.5 A6 6 0 0 1 584 295.5 Z" fill="#ADA99B"/>
<circle cx="584" cy="305.5" r="3" fill="#ADA99B"/><circle cx="580.5" cy="311.5" r="3.2" fill="#ADA99B"/><circle cx="587.5" cy="311.5" r="3.2" fill="#ADA99B"/>
<circle cx="584" cy="328.5" r="6.5" fill="#ADA99B"/><path d="M584 322 V328.5 L579 331" fill="none" stroke="#ECE9D8"/>
<circle cx="584" cy="348" r="6.3" fill="none" stroke="#ADA99B"/><circle cx="584" cy="350" r="2.7" fill="none" stroke="#ADA99B"/><path d="M580 343 Q584 347 588 343" fill="none" stroke="#ADA99B"/>
<line x1="574" y1="359.5" x2="594" y2="359.5" stroke="#C4C0B0" stroke-width="1"/>
<line x1="574" y1="360.5" x2="594" y2="360.5" stroke="#fff" stroke-width="1"/>
<g fill="none" stroke="#ADA99B" stroke-width="1"><path d="M578 368.5 H590"/><path d="M579 379 V371 Q586 370 590 377 Z" fill="#ADA99B" stroke="none"/><path d="M578 380.5 H591" stroke-dasharray="1 1"/><path d="M578 386.5 H590 M579 384.5 L578 386.5 L579 388.5 M589 384.5 L590 386.5 L589 388.5"/><path d="M578 399.5 H591 M579 398 V392 M582 398 V390 M585 398 V393 M588 398 V391"/><path d="M578 406.5 H590 M588 404.5 L590 406.5 L588 408.5"/><path d="M578 417.5 H591 M580 416 V411 M584 416 V412 M588 416 V410"/></g>
<line x1="574" y1="424.5" x2="594" y2="424.5" stroke="#C4C0B0" stroke-width="1"/>
<line x1="574" y1="425.5" x2="594" y2="425.5" stroke="#fff" stroke-width="1"/>
<path d="M579 433 L583 432 L585 434 L589 432 L590 436 L587 439 L588 441 L583 440 L580 437 Z" fill="#ADA99B"/>
<line x1="574" y1="449.5" x2="594" y2="449.5" stroke="#C4C0B0" stroke-width="1"/>
<line x1="574" y1="450.5" x2="594" y2="450.5" stroke="#fff" stroke-width="1"/>
<rect x="248" y="43" width="172" height="134" fill="#fff"/>
<path d="M248.5 43 V176.5 H419.5 V43" fill="none" stroke="#8F8C80"/>
<rect x="250" y="76" width="167" height="15" fill="#316AC5" />
<text x="264.7" y="57" font-size="9.5" fill="#000" font-weight="normal" text-anchor="start" >Openen ...</text>
<text x="264.7" y="71.8" font-size="9.5" fill="#000" font-weight="normal" text-anchor="start" >Sluiten</text>
<text x="264.7" y="86.8" font-size="9.5" fill="#fff" font-weight="normal" text-anchor="start" >Raadplegen</text>
<text x="264.7" y="101.8" font-size="9.5" fill="#000" font-weight="normal" text-anchor="start" >Database bewerken ...</text>
<text x="264.7" y="124.8" font-size="9.5" fill="#ACA899" font-weight="normal" text-anchor="start" >Eerste Record</text>
<text x="264.7" y="139.8" font-size="9.5" fill="#ACA899" font-weight="normal" text-anchor="start" >Vorige Record</text>
<text x="264.7" y="154.8" font-size="9.5" fill="#000" font-weight="normal" text-anchor="start" >Volgende Record</text>
<text x="264.7" y="169.8" font-size="9.5" fill="#000" font-weight="normal" text-anchor="start" >Laatste Record</text>
<text x="372.8" y="101.8" font-size="9.5" fill="#000" font-weight="normal" text-anchor="start" >Ctrl+E</text>
<line x1="250" y1="109.5" x2="417" y2="109.5" stroke="#ACA899" stroke-width="1"/>
<path d="M328.5 80.5 V94 L331.5 91 L334 96.5 L336 95.5 L333.6 90.2 L337.8 90.2 Z" fill="#fff" stroke="#000" stroke-width="0.9"/>
<line x1="4" y1="484.5" x2="596" y2="484.5" stroke="#D8D4C4" stroke-width="1"/>
<text x="5" y="497.8" font-size="9.7" fill="#000" font-weight="normal" text-anchor="start" >Geeft informatie over de naam en de velden van de actieve Database.</text>
<text x="315.5" y="497.8" font-size="9.5" fill="#000" font-weight="normal" text-anchor="start" >X</text>
<rect x="325" y="487" width="35" height="13" fill="#ECE9D8"/>
<line x1="325" y1="486.5" x2="360" y2="486.5" stroke="#ACA899" stroke-width="1"/>
<line x1="325.5" y1="486" x2="325.5" y2="500" stroke="#ACA899" stroke-width="1"/>
<line x1="325" y1="499.5" x2="360" y2="499.5" stroke="#fff" stroke-width="1"/>
<line x1="359.5" y1="486" x2="359.5" y2="500" stroke="#fff" stroke-width="1"/>
<text x="328" y="497.8" font-size="9.5" fill="#000" font-weight="normal" text-anchor="start" >9</text>
<text x="365" y="497.8" font-size="9.5" fill="#000" font-weight="normal" text-anchor="start" >Y</text>
<rect x="375" y="487" width="35" height="13" fill="#ECE9D8"/>
<line x1="375" y1="486.5" x2="410" y2="486.5" stroke="#ACA899" stroke-width="1"/>
<line x1="375.5" y1="486" x2="375.5" y2="500" stroke="#ACA899" stroke-width="1"/>
<line x1="375" y1="499.5" x2="410" y2="499.5" stroke="#fff" stroke-width="1"/>
<line x1="409.5" y1="486" x2="409.5" y2="500" stroke="#fff" stroke-width="1"/>
<text x="377" y="497.8" font-size="9.5" fill="#000" font-weight="normal" text-anchor="start" >0,93</text>
<text x="413" y="497.8" font-size="9.5" fill="#000" font-weight="normal" text-anchor="start" >B</text>
<rect x="425" y="487" width="34" height="13" fill="#ECE9D8"/>
<line x1="425" y1="486.5" x2="459" y2="486.5" stroke="#ACA899" stroke-width="1"/>
<line x1="425.5" y1="486" x2="425.5" y2="500" stroke="#ACA899" stroke-width="1"/>
<line x1="425" y1="499.5" x2="459" y2="499.5" stroke="#fff" stroke-width="1"/>
<line x1="458.5" y1="486" x2="458.5" y2="500" stroke="#fff" stroke-width="1"/>
<text x="463" y="497.8" font-size="9.5" fill="#000" font-weight="normal" text-anchor="start" >H</text>
<rect x="476" y="487" width="34" height="13" fill="#ECE9D8"/>
<line x1="476" y1="486.5" x2="510" y2="486.5" stroke="#ACA899" stroke-width="1"/>
<line x1="476.5" y1="486" x2="476.5" y2="500" stroke="#ACA899" stroke-width="1"/>
<line x1="476" y1="499.5" x2="510" y2="499.5" stroke="#fff" stroke-width="1"/>
<line x1="509.5" y1="486" x2="509.5" y2="500" stroke="#fff" stroke-width="1"/>
<text x="514" y="497.8" font-size="9.5" fill="#000" font-weight="normal" text-anchor="start" >mm</text>
<rect x="534" y="487" width="45" height="13" fill="#ECE9D8"/>
<line x1="534" y1="486.5" x2="579" y2="486.5" stroke="#ACA899" stroke-width="1"/>
<line x1="534.5" y1="486" x2="534.5" y2="500" stroke="#ACA899" stroke-width="1"/>
<line x1="534" y1="499.5" x2="579" y2="499.5" stroke="#fff" stroke-width="1"/>
<line x1="578.5" y1="486" x2="578.5" y2="500" stroke="#fff" stroke-width="1"/>
<text x="536" y="497.8" font-size="9.5" fill="#000" font-weight="normal" text-anchor="start" >S1: 1 (96)</text>
<path d="M594 489 L583 500 M594 493 L587 500 M594 497 L591 500" stroke="#ACA899" stroke-width="1"/>
<path d="M595 490 L584 501 M595 494 L588 501 M595 498 L592 501" stroke="#fff" stroke-width="1"/></svg></body></html>
